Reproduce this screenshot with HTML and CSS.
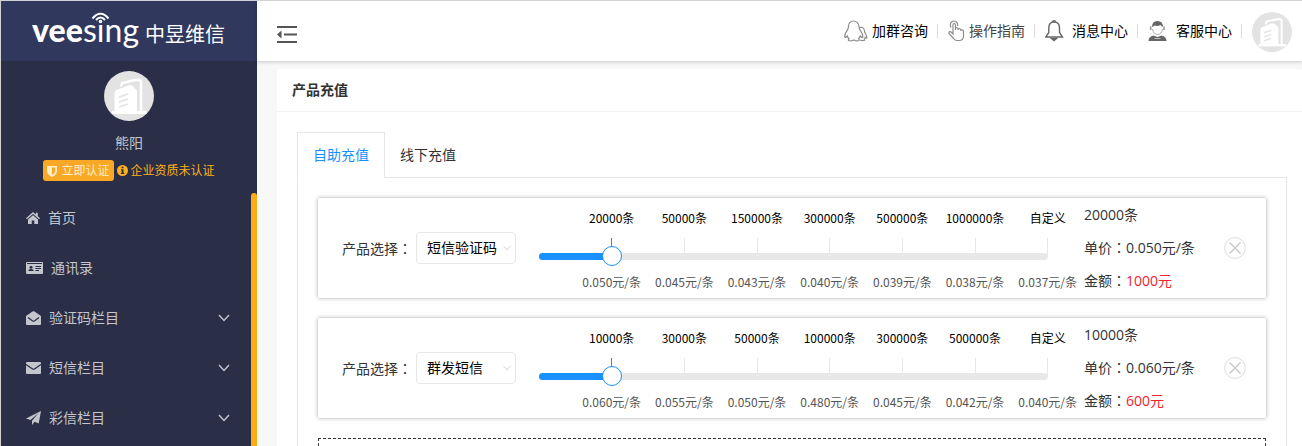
FILE: index.html
```html
<!DOCTYPE html>
<html lang="zh-CN">
<head>
    <meta charset="UTF-8">
    <meta name="viewport" content="width=device-width, initial-scale=1.0">
    <title>产品充值</title>
    <link rel="stylesheet" href="styles.css">
</head>
<body>
    <!-- shared icons -->
    <svg class="sprite" aria-hidden="true">
        <symbol id="avatar" viewBox="0 0 50 50">
            <circle cx="25" cy="25" r="25" fill="#e3e3e3"/>
            <path d="M17 15.500l1-3.500 13-3h4q2 0 2 2.500v30" fill="none" stroke="#fff" stroke-width="2.500"/>
            <path d="M10.500 41.500V22q0-2 2-3l13-5q2 0 4 2l3.500 3.500v22z" fill="#fff"/>
            <path d="M8 41.500h34.500" stroke="#fff" stroke-width="3"/>
            <path d="M15 26l9-3M15 31l9-3M15 36l9-3" stroke="#e3e3e3" stroke-width="1.800"/>
        </symbol>
        <symbol id="chevron" viewBox="0 0 12 8">
            <path d="M1 1l5 5.500L11 1" fill="none" stroke="currentColor" stroke-width="1.400"/>
        </symbol>
        <symbol id="close" viewBox="0 0 22 22">
            <circle cx="11" cy="11" r="10.400" fill="none" stroke="#ddd"/>
            <path d="M5.500 5.500l11 11M16.500 5.500l-11 11" stroke="#c8c8c8" stroke-width="1.400"/>
        </symbol>
    </svg>

    <div class="app">
        <aside class="sidebar">
            <a class="logo" href="#">
                <svg width="256" height="60" viewBox="0 0 256 60" role="img" aria-label="veesing 中昱维信">
                    <text class="logo-bold" x="31" y="41">vee</text>
                    <text class="logo-light" x="82" y="41">sıng</text>
                    <text class="logo-cn" x="144" y="41">中昱维信</text>
                    <circle cx="99.500" cy="20.500" r="1.800" fill="#fff"/>
                    <path d="M91.500 17.500q8-9.500 16 0M95 19q4.500-5 9 0" fill="none" stroke="#fff" stroke-width="2"/>
                </svg>
            </a>
            <div class="user">
                <svg class="user-avatar"><use href="#avatar"/></svg>
                <div class="user-name">熊阳</div>
                <div class="auth">
                    <a class="auth-btn" href="#">
                        <svg width="10" height="12" viewBox="0 0 10 12"><path d="M0 1h10v5q0 3.500-5 6Q0 9.500 0 6z" fill="currentColor"/><path d="M5 2.500h3.200V6q0 2-3.200 4z" fill="#f9a825"/></svg>
                        <span>立即认证</span>
                    </a>
                    <svg width="11" height="11" viewBox="0 0 11 11"><circle cx="5.500" cy="5.500" r="5.500" fill="#fcb01c"/><path d="M4.500 1.700h2v1.600h-2zM4 4.300h2.500v3.500h.8v1.200H3.900V7.800h.8V5.500H4z" fill="#2a2e47"/></svg>
                    <span>企业资质未认证</span>
                </div>
            </div>
            <nav class="nav">
                <a class="nav-item" href="#">
                    <svg width="14" height="12" viewBox="0 0 14 12"><path d="M7 0l2.800 2.500V.800h2v3.500L14 6.300l-.900 1L7 2 .9 7.300 0 6.300z" fill="currentColor"/><path d="M2 7.500L7 3.200l5 4.300V12H8.300V8.500H5.700V12H2z" fill="currentColor"/></svg>
                    <span>首页</span>
                </a>
                <a class="nav-item" href="#">
                    <svg width="17" height="12" viewBox="0 0 17 12"><path d="M1 0h15q1 0 1 1v10q0 1-1 1H1q-1 0-1-1V1q0-1 1-1z" fill="currentColor"/><path d="M1 1.500h15M9.500 4.500h5.500M9.500 6.500h5.500M9.500 8.500h3.500" stroke="#2a2e47"/><circle cx="5" cy="5.200" r="1.500" fill="#2a2e47"/><path d="M2.300 9q0-2 2.700-2t2.700 2z" fill="#2a2e47"/></svg>
                    <span>通讯录</span>
                </a>
                <a class="nav-item" href="#">
                    <svg width="15" height="14" viewBox="0 0 15 14"><path d="M0 5l6.500-4.500q1-.700 2 0L15 5v8q0 1-1 1H1q-1 0-1-1z" fill="currentColor"/><path d="M2 6.500l4.300 3.300q1.200.800 2.400 0L13 6.500" fill="none" stroke="#2a2e47" stroke-width="1.200"/></svg>
                    <span>验证码栏目</span>
                    <svg class="nav-arrow" width="12" height="8"><use href="#chevron"/></svg>
                </a>
                <a class="nav-item" href="#">
                    <svg width="15" height="12" viewBox="0 0 15 12"><path d="M1 0h13q1 0 1 1v10q0 1-1 1H1q-1 0-1-1V1q0-1 1-1z" fill="currentColor"/><path d="M0 2.500l6.200 4.300q1.300.900 2.600 0L15 2.500" fill="none" stroke="#2a2e47" stroke-width="1.200"/></svg>
                    <span>短信栏目</span>
                    <svg class="nav-arrow" width="12" height="8"><use href="#chevron"/></svg>
                </a>
                <a class="nav-item" href="#">
                    <svg width="15" height="14" viewBox="0 0 15 14"><path d="M15 0l-2.300 12.500-4.200-1.800L6 14v-4.300L12.500 2 4.500 9 0 7.500z" fill="currentColor"/></svg>
                    <span>彩信栏目</span>
                    <svg class="nav-arrow" width="12" height="8"><use href="#chevron"/></svg>
                </a>
            </nav>
        </aside>

        <div class="page">
            <header class="topbar">
                <button class="menu-btn" type="button" aria-label="收起菜单">
                    <svg width="20" height="19" viewBox="0 0 20 19"><path d="M0 2h20M7 9.500h13M0 17h20" stroke="#555" stroke-width="2"/><path d="M4.500 5.500v8L0 9.500z" fill="#555"/></svg>
                </button>
                <div class="links">
                    <a class="link" href="#">
                        <svg width="24" height="22" viewBox="0 0 24 22" fill="none" stroke="#8c8c8c" stroke-width="1.200"><path d="M9.500 1Q4.500 1 4.300 7.500q0 1.500-1.300 3.200-2.300 3-2.300 6.500 1 .700 2.600-1.200.600 1.800 1.700 2.700-1 .600-.5 1.800 2.500.900 4.500-.300h1.500q2 1.200 4.500.300.500-1.200-.5-1.800 1.100-.900 1.700-2.700 1.600 1.900 2.600 1.200 0-3.500-2.300-6.500-1.300-1.700-1.300-3.200Q14.500 1 9.500 1z"/><path d="M15.500 7.500q4.500-1 5 3.500 0 1.300.8 2.500 1.700 2.500 1.500 4.500-.800.300-1.600-.700-.300 1.200-1 1.800.5.400.5 1.200-2 .800-4.500 0"/></svg>
                        <span>加群咨询</span>
                    </a>
                    <a class="link link-muted" href="#">
                        <svg width="17" height="22" viewBox="0 0 17 22" fill="none" stroke="#8c8c8c" stroke-width="1.200"><path d="M5 12V5q0-1.500 1.200-1.500T7.500 5v5V8.500q0-1 1.200-1T10 9v1-.500q0-1 1.300-1t1.300 1.300v1q0-1 1.400-.900 1.500.1 1.500 1.600v4.500q0 4.500-4.500 4.500H9q-2 0-3.500-2L1 13.500q-.500-1.200.500-1.700t2 .500L5 14z"/><path d="M3 7.500Q1.500 4 3.500 2t5 0Q10 3.500 9.500 6"/></svg>
                        <span>操作指南</span>
                    </a>
                    <a class="link" href="#">
                        <svg width="23" height="22" viewBox="0 0 23 22" fill="none" stroke="#666" stroke-width="1.400"><path d="M9 2q5.500 0 5.500 6v4.500l3 4.500H.8l3-4.500V8Q3.800 2 9 2z"/><path d="M7.500 2q0-1.300 1.500-1.300T10.500 2"/><path d="M6.500 18.500h5L9 20.500z" fill="#666"/></svg>
                        <span>消息中心</span>
                    </a>
                    <a class="link" href="#">
                        <svg width="24" height="22" viewBox="0 0 24 22"><path d="M4 7Q4 1 9.500 1T15 7q-1.500-.500-2.500-2-3 1.700-6 .500Q5.500 6.500 4 7z" fill="#666"/><path d="M2.700 6.500v3.500M16 6.500v3.500" stroke="#999" stroke-width="1.600"/><path d="M4.500 9q1 5.500 5 5.500t5-5.500" fill="none" stroke="#aaa"/><path d="M.500 21Q.500 16.500 5.500 15.500l4 1.500 4-1.500q5 1 5 5.500z" fill="#666"/><path d="M6.500 18.500h6" stroke="#bbb"/></svg>
                        <span>客服中心</span>
                    </a>
                    <a class="top-avatar" href="#" aria-label="个人中心"><svg width="40" height="40"><use href="#avatar"/></svg></a>
                </div>
            </header>

            <main class="card">
                <h1 class="card-title">产品充值</h1>
                <div class="card-body">
                    <div class="tabs" role="tablist">
                        <button class="tab tab-active" type="button" role="tab" aria-selected="true">自助充值</button>
                        <button class="tab" type="button" role="tab" aria-selected="false">线下充值</button>
                    </div>
                    <div class="panel">
                        <section class="product">
                            <label class="product-label" for="product1">产品选择<span class="colon" lang="zh-TW">：</span></label>
                            <div class="select">
                                <select id="product1">
                                    <option selected>短信验证码</option>
                                    <option>群发短信</option>
                                </select>
                                <svg class="select-arrow" width="10" height="6"><use href="#chevron"/></svg>
                            </div>
                            <div class="slider">
                                <div class="marks">
                                    <div class="mark mark-on"><span class="amount">20000条</span><span class="price">0.050元/条</span></div>
                                    <div class="mark"><span class="amount">50000条</span><span class="price">0.045元/条</span></div>
                                    <div class="mark"><span class="amount">150000条</span><span class="price">0.043元/条</span></div>
                                    <div class="mark"><span class="amount">300000条</span><span class="price">0.040元/条</span></div>
                                    <div class="mark"><span class="amount">500000条</span><span class="price">0.039元/条</span></div>
                                    <div class="mark"><span class="amount">1000000条</span><span class="price">0.038元/条</span></div>
                                    <div class="mark"><span class="amount">自定义</span><span class="price">0.037元/条</span></div>
                                </div>
                                <div class="rail"><div class="rail-fill" style="width: 14.3%"></div></div>
                                <input class="range" type="range" min="0" max="7" value="1" aria-label="充值数量">
                            </div>
                            <div class="summary">
                                <div>20000条</div>
                                <div>单价<span class="colon" lang="zh-TW">：</span>0.050元/条</div>
                                <div>金额<span class="colon" lang="zh-TW">：</span><span class="total">1000元</span></div>
                            </div>
                            <button class="remove" type="button" aria-label="删除"><svg width="22" height="22"><use href="#close"/></svg></button>
                        </section>

                        <section class="product">
                            <label class="product-label" for="product2">产品选择<span class="colon" lang="zh-TW">：</span></label>
                            <div class="select">
                                <select id="product2">
                                    <option>短信验证码</option>
                                    <option selected>群发短信</option>
                                </select>
                                <svg class="select-arrow" width="10" height="6"><use href="#chevron"/></svg>
                            </div>
                            <div class="slider">
                                <div class="marks">
                                    <div class="mark mark-on"><span class="amount">10000条</span><span class="price">0.060元/条</span></div>
                                    <div class="mark"><span class="amount">30000条</span><span class="price">0.055元/条</span></div>
                                    <div class="mark"><span class="amount">50000条</span><span class="price">0.050元/条</span></div>
                                    <div class="mark"><span class="amount">100000条</span><span class="price">0.480元/条</span></div>
                                    <div class="mark"><span class="amount">300000条</span><span class="price">0.045元/条</span></div>
                                    <div class="mark"><span class="amount">500000条</span><span class="price">0.042元/条</span></div>
                                    <div class="mark"><span class="amount">自定义</span><span class="price">0.040元/条</span></div>
                                </div>
                                <div class="rail"><div class="rail-fill" style="width: 14.3%"></div></div>
                                <input class="range" type="range" min="0" max="7" value="1" aria-label="充值数量">
                            </div>
                            <div class="summary">
                                <div>10000条</div>
                                <div>单价<span class="colon" lang="zh-TW">：</span>0.060元/条</div>
                                <div>金额<span class="colon" lang="zh-TW">：</span><span class="total">600元</span></div>
                            </div>
                            <button class="remove" type="button" aria-label="删除"><svg width="22" height="22"><use href="#close"/></svg></button>
                        </section>

                        <div class="add-box"></div>
                    </div>
                </div>
            </main>
        </div>
    </div>
</body>
</html>
```
FILE: styles.css
```css
* {
    box-sizing: border-box;
}
body {
    margin: 0;
    font-family: "Open Sans", "Noto Sans CJK SC", sans-serif;
    font-size: 14px;
    line-height: 20px;
    color: #333;
    background: #f8f8f8;
}
a {
    color: inherit;
    text-decoration: none;
}
button {
    margin: 0;
    padding: 0;
    border: none;
    background: none;
    font: inherit;
    color: inherit;
    cursor: pointer;
}
svg {
    display: block;
    flex: none;
}
.sprite {
    position: absolute;
    width: 0;
    height: 0;
}
.app {
    display: flex;
    height: 100vh;
    overflow: hidden;
    border-top: 1px solid #d2d2d2;
    border-left: 1px solid #d2d2d2;
}

/* sidebar */
.sidebar {
    display: flex;
    flex-direction: column;
    flex: none;
    width: 256px;
    background: #2a2e47;
    color: #c4c6cd;
}
.logo {
    background: #30385d;
}
.logo text {
    fill: #fff;
}
.logo-bold {
    font: 900 32px Lato, sans-serif;
}
.logo-light {
    font: 400 32px Lato, sans-serif;
}
.logo-cn {
    font: 400 20px "Noto Sans CJK SC", sans-serif;
}
.user {
    display: flex;
    flex-direction: column;
    align-items: center;
    padding: 10px 0 12px;
}
.user-avatar {
    width: 50px;
    height: 50px;
}
.user-name {
    margin: 12px 0 7px;
}
.auth {
    display: flex;
    align-items: center;
    gap: 3px;
    font-size: 12px;
    color: #fcb01c;
}
.auth-btn {
    display: flex;
    align-items: center;
    gap: 4px;
    height: 21px;
    padding: 0 4px;
    border-radius: 3px;
    background: #f9a825;
    color: #ffedc8;
}
.nav {
    position: relative;
    flex: 1;
}
.nav::after {
    content: "";
    position: absolute;
    top: 0;
    right: 0;
    bottom: 0;
    width: 6px;
    border-radius: 3px 3px 0 0;
    background: #fcad14;
}
.nav-item {
    display: flex;
    align-items: center;
    gap: 8px;
    height: 50px;
    padding: 0 27px 0 25px;
}
.nav-arrow {
    margin-left: auto;
}

/* top bar */
.page {
    flex: 1;
    min-width: 0;
}
.topbar {
    position: relative;
    display: flex;
    align-items: center;
    justify-content: space-between;
    height: 60px;
    padding: 0 10px 0 20px;
    background: #fff;
    box-shadow: 0 1px 4px rgba(0, 0, 0, 0.2);
}
.menu-btn {
    padding-top: 6px;
}
.links {
    display: flex;
    align-items: center;
}
.link {
    display: flex;
    align-items: center;
    gap: 4px;
    height: 14px;
    padding: 0 9px 0 10px;
    border-right: 1px solid #ddd;
    color: #000;
}
.link-muted {
    color: #444;
}
.top-avatar {
    padding: 2px 0 0 10px;
}

/* card */
.card {
    margin: 8px 0 0 20px;
    border-radius: 2px;
    background: #fff;
}
.card-title {
    margin: 0;
    padding: 0 15px;
    font-size: 14px;
    line-height: 42px;
    border-bottom: 1px solid #f3f3f3;
}
.card-body {
    padding: 20px 15px 20px 20px;
}
.tabs {
    display: flex;
    border-bottom: 1px solid #e6e6e6;
}
.tab {
    height: 45px;
    padding: 0 15px;
}
.tab-active {
    height: 46px;
    margin-bottom: -1px;
    border: 1px solid #e6e6e6;
    border-bottom-color: #fff;
    background: #fff;
    color: #1890ff;
}
.panel {
    padding: 20px;
    border: 1px solid #e6e6e6;
    border-top: none;
}

/* product row */
.product {
    display: flex;
    align-items: center;
    height: 100px;
    margin-bottom: 20px;
    padding: 0 20px 0 24px;
    box-shadow: 0 0 4px rgba(0, 0, 0, 0.35);
}
.product-label {
    width: 74px;
}
/* centred full-width colon */
.colon {
    font-family: "Noto Sans CJK TC", sans-serif;
}
.select {
    position: relative;
    margin-right: 23px;
}
.select select {
    appearance: none;
    display: block;
    width: 100px;
    height: 32px;
    padding: 0 10px;
    border: 1px solid #e6e6e6;
    border-radius: 4px;
    background: #fff;
    font: inherit;
    color: #000;
}
.select-arrow {
    position: absolute;
    top: 13px;
    right: 4px;
    color: #ddd;
    pointer-events: none;
}
/* half-step columns: marks are centred on the ends of the steps */
.slider {
    display: grid;
    flex: 1;
    grid-template-columns: repeat(15, minmax(0, 1fr));
    grid-template-rows: 40px 28px 32px;
    font-family: "Noto Sans CJK SC", sans-serif;
    font-size: 12px;
}
.marks {
    display: flex;
    grid-area: 1 / 2 / 4 / 16;
}
.mark {
    display: flex;
    flex: 1 1 0;
    flex-direction: column;
    align-items: center;
    min-width: 0;
    white-space: nowrap;
}
.mark::before {
    content: "";
    order: 1;
    width: 1px;
    height: 18px;
    background: #e8e8e8;
}
.mark-on::before {
    background: #1890ff;
}
.amount {
    line-height: 40px;
    color: #000;
}
.price {
    order: 2;
    margin-top: 10px;
    line-height: 32px;
    color: #555;
}
.rail {
    grid-area: 2 / 1 / 3 / 15;
    align-self: end;
    z-index: 1;
    height: 7px;
    margin-bottom: 6px;
    border-radius: 4px;
    background: #e8e8e8;
}
.rail-fill {
    height: 100%;
    border-radius: 4px;
    background: #1890ff;
}
.range {
    appearance: none;
    grid-area: 2 / 1 / 3 / 15;
    align-self: end;
    z-index: 2;
    height: 20px;
    margin: 0 -10px;
    background: none;
}
.range::-webkit-slider-thumb {
    appearance: none;
    width: 20px;
    height: 20px;
    border: 1px solid #1890ff;
    border-radius: 50%;
    background: #fff;
}
.summary {
    width: 140px;
    line-height: 32px;
}
.total {
    color: #f5222d;
}
.add-box {
    height: 60px;
    border: 1px dashed #333;
}
```
